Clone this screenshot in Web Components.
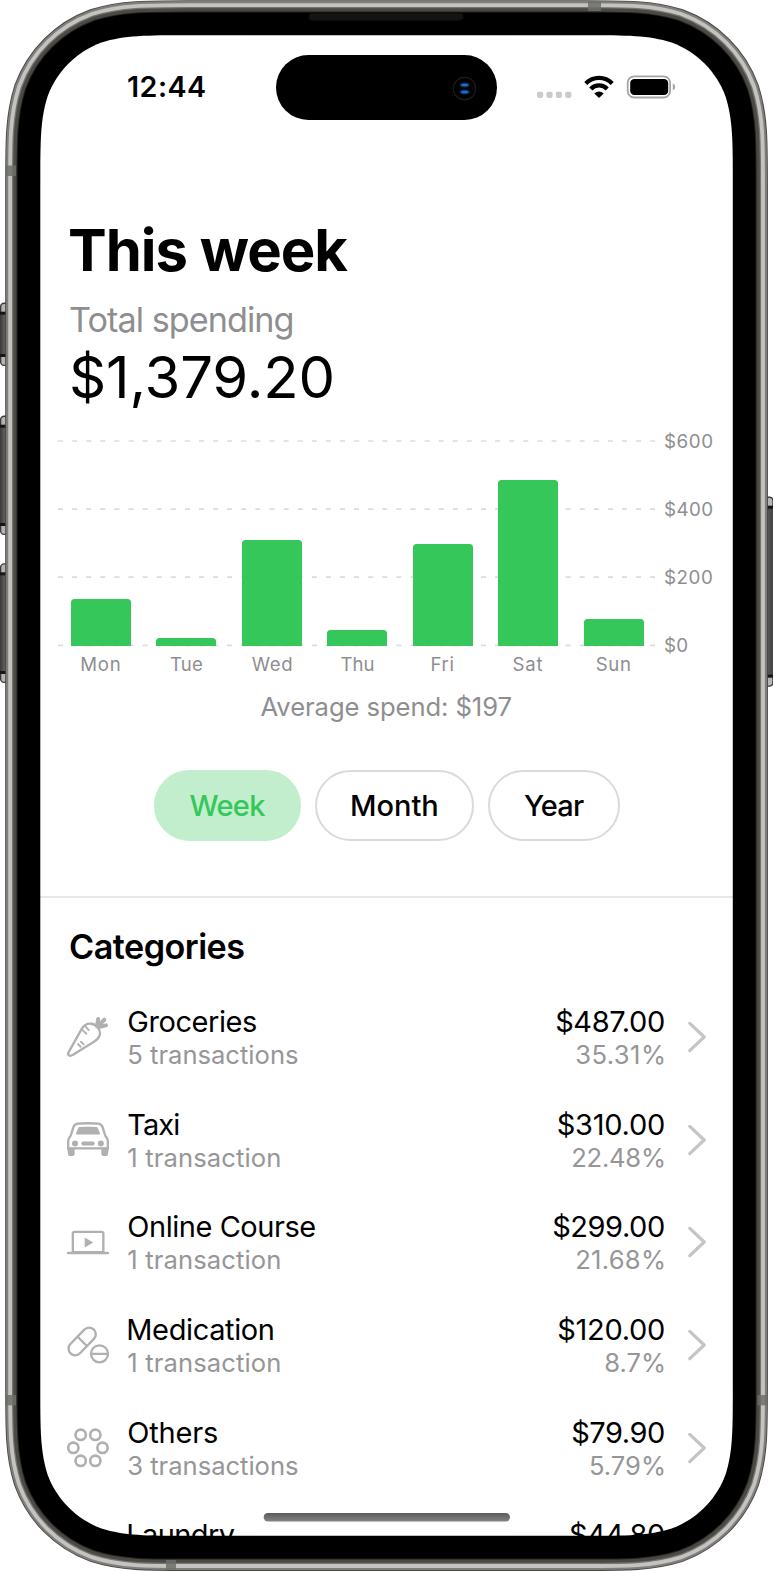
<!DOCTYPE html>
<html lang="en">
<head>
<meta charset="utf-8">
<title>Spending – This week</title>
<style>
  html, body { margin: 0; background: #fff; }
  body { width: 773px; height: 1571px; overflow: hidden; font-family: Inter, "Liberation Sans", sans-serif; color: #000; }
</style>
</head>
<body>
<phone-frame>
  <status-bar></status-bar>
  <week-summary></week-summary>
  <spend-chart></spend-chart>
  <range-picker></range-picker>
  <category-list></category-list>
</phone-frame>

<script>
/* Attaches an open shadow root with the given markup. */
class Base extends HTMLElement {
  mount(html) {
    const t = document.createElement('template');
    t.innerHTML = html;
    this.attachShadow({ mode: 'open' }).append(t.content.cloneNode(true));
  }
}

/* One line of text tracked to a given ink width: <fit-text w s wt>. */
const ctx = document.createElement('canvas').getContext('2d');
customElements.define('fit-text', class extends Base {
  connectedCallback() {
    if (this.shadowRoot) return;
    const w = +this.getAttribute('w'), s = +this.getAttribute('s');
    const wt = this.getAttribute('wt') || 400, lh = this.getAttribute('lh');
    const text = this.textContent;
    ctx.font = `${wt} ${s}px Inter, "Liberation Sans", sans-serif`;
    const m = ctx.measureText(text);
    const ls = (w - (m.actualBoundingBoxRight + m.actualBoundingBoxLeft)) / (text.length - 1);
    this.mount(`<style>
      :host { display: block; flex: none; width: ${w}px; height: ${lh}px; white-space: nowrap;
              font-size: ${s}px; font-weight: ${wt}; line-height: ${lh}px; }
      span { display: block; margin-left: ${m.actualBoundingBoxLeft}px; letter-spacing: ${ls}px; }
    </style><span><slot></slot></span>`);
  }
});

/* Rounded rectangle with continuous-curvature corners. */
function squircle(x, y, w, h, r) {
  const a = 1.528665 * r, b = 1.088493 * r, c = .868407 * r, d = .631494 * r,
        e = .074911 * r, f = .372824 * r, g = .16906 * r, X = x + w, Y = y + h;
  return `M${x + a} ${y}H${X - a}C${X - b} ${y} ${X - c} ${y} ${X - d} ${y + e}C${X - f} ${y + g} ${X - g} ${y + f} ${X - e} ${y + d}C${X} ${y + c} ${X} ${y + b} ${X} ${y + a}
  V${Y - a}C${X} ${Y - b} ${X} ${Y - c} ${X - e} ${Y - d}C${X - g} ${Y - f} ${X - f} ${Y - g} ${X - d} ${Y - e}C${X - c} ${Y} ${X - b} ${Y} ${X - a} ${Y}
  H${x + a}C${x + b} ${Y} ${x + c} ${Y} ${x + d} ${Y - e}C${x + f} ${Y - g} ${x + g} ${Y - f} ${x + e} ${Y - d}C${x} ${Y - c} ${x} ${Y - b} ${x} ${Y - a}
  V${y + a}C${x} ${y + b} ${x} ${y + c} ${x + e} ${y + d}C${x + g} ${y + f} ${x + f} ${y + g} ${x + d} ${y + e}C${x + c} ${y} ${x + b} ${y} ${x + a} ${y}Z`;
}

customElements.define('phone-frame', class extends Base {
  connectedCallback() {
    const path = squircle(40.3, 35.3, 692.5, 1500.5, 97);
    const rings = [[35.1, '#494845'], [34.2, '#807e7b'], [32.1, '#c4c3c1'], [28.3, '#75736f'], [27, '#4b4943'], [23.8, '#24221f'], [22.8, '#000']]
      .map(([d, c]) => `<path d="${path}" fill="none" stroke="${c}" stroke-width="${2 * d}"/>`).join('');
    const key = (x, y, h) => `<rect x="${x + .6}" y="${y + .6}" width="12" height="${h - 1.2}" rx="3.5" fill="#b5b4b2" stroke="#3b3a38" stroke-width="1.4"/>
      <rect x="${x}" y="${y + 10}" width="13" height="${h - 20}" fill="url(#key)"/>
      <rect x="${x}" y="${y + 9}" width="13" height="3" fill="#161615"/><rect x="${x}" y="${y + h - 12}" width="13" height="3" fill="#161615"/>`;
    this.mount(`<style>
      :host { display: grid; width: 773px; height: 1571px; }
      .screen, svg { grid-area: 1 / 1; }
      .screen { margin: 35px 40px; width: 693px; height: 1501px; overflow: hidden; background: #fff; display: flex; flex-direction: column; }
      svg { z-index: 1; pointer-events: none; }
    </style>
    <div class="screen"><slot></slot></div>
    <svg width="773" height="1571" viewBox="0 0 773 1571">
      <defs>
        <mask id="out" maskUnits="userSpaceOnUse" x="0" y="0" width="773" height="1571"><rect width="773" height="1571" fill="#fff"/><path d="${path}" fill="#000"/></mask>
        <linearGradient id="key"><stop offset="0" stop-color="#3a3937"/><stop offset=".35" stop-color="#5f5d5b"/><stop offset="1" stop-color="#444341"/></linearGradient>
        <linearGradient id="bar" x2="0" y2="1"><stop offset="0" stop-color="#5c5b59"/><stop offset="1" stop-color="#848381"/></linearGradient>
      </defs>
      ${key(0, 302.7, 63.3)}${key(0, 415.7, 119.3)}${key(0, 563.3, 119.7)}
      ${key(760.4, 496.7, 190)}
      <g mask="url(#out)">${rings}</g>
      <g fill="#6f6e6a">
        <rect x="6" y="165.5" width="10" height="10.5" opacity=".85"/><rect x="6" y="1395" width="10" height="10.3" opacity=".85"/>
        <rect x="757.5" y="1395" width="10" height="10.3" opacity=".85"/>
        <rect x="588" y="1" width="13" height="10" opacity=".85"/><rect x="166" y="1560" width="10" height="9.5" opacity=".85"/>
      </g>
      <rect x="308.8" y="13.3" width="154.5" height="7" rx="3.5" fill="#141414" stroke="#0e0e0e"/>
      <rect x="263.7" y="1513" width="246.3" height="8.4" rx="4.2" fill="url(#bar)"/>
    </svg>`);
  }
});

customElements.define('status-bar', class extends Base {
  connectedCallback() {
    this.mount(`<style>
      :host { display: flex; align-items: center; height: 65px; padding: 19.5px 0 0 88px; }
      .time { margin-top: -1.6px; }
      .island { width: 221px; height: 65px; margin-left: 71px; border-radius: 33px; background: #000; }
      .sys { margin-left: 39px; }
      svg { display: block; }
    </style>
    <fit-text class="time" w="77" s="28.7" wt="600" lh="65">12:44</fit-text>
    <div class="island"><svg width="221" height="65" viewBox="0 0 221 65">
      <circle cx="188.6" cy="33.6" r="11.2" fill="#020203" stroke="#1c1c1c" stroke-width="1.2"/>
      <ellipse cx="188.7" cy="30" rx="5" ry="2.5" fill="#0a2c66"/><ellipse cx="188.7" cy="30" rx="3.4" ry="1.3" fill="#1f6fc6"/>
      <ellipse cx="188.7" cy="37" rx="5" ry="2.5" fill="#0a2c66"/><ellipse cx="188.7" cy="37" rx="3.4" ry="1.3" fill="#1f6fc6"/>
    </svg></div>
    <svg class="sys" width="142" height="65" viewBox="536 54.5 142 65">
      <g fill="#cbcbcd"><rect x="537" y="91.2" width="6.2" height="6.2" rx="1.8"/><rect x="546.4" y="91.2" width="6.2" height="6.2" rx="1.8"/><rect x="555.8" y="91.2" width="6.2" height="6.2" rx="1.8"/><rect x="565.2" y="91.2" width="6.2" height="6.2" rx="1.8"/></g>
      <g fill="none" stroke="#000" stroke-width="4.3"><path d="M585.8 82.9A18.5 18.5 0 0 1 612.2 82.9"/><path d="M590.8 88.4A11.5 11.5 0 0 1 607.2 88.4"/></g>
      <path d="M594.3 92.9Q599 89 603.7 92.9L599.5 97.1Q599 97.6 598.5 97.1Z"/>
      <rect x="627.7" y="75.8" width="42.4" height="21.2" rx="6.6" fill="#fff" stroke="#a5a5a5" stroke-width="1.8"/>
      <rect x="630.2" y="78.4" width="38" height="16.2" rx="4.2"/>
      <path d="M672.8 82.8Q675.2 84 675.2 86.4T672.8 90Z" fill="#a5a5a5"/>
    </svg>`);
  }
});

customElements.define('week-summary', class extends Base {
  connectedCallback() {
    this.mount(`<style>
      :host { display: flex; flex-direction: column; padding: 95.1px 0 0 30px; }
      .sub { margin-top: 14.4px; color: #8e8e90; }
      .sum { margin: 6px 0 0 2px; }
    </style>
    <fit-text w="278.3" s="58" wt="700" lh="70">This week</fit-text>
    <fit-text class="sub" w="222.5" s="34.2" lh="42">Total spending</fit-text>
    <fit-text class="sum" w="260.5" s="58" lh="60">$1,379.20</fit-text>`);
  }
});

customElements.define('spend-chart', class extends Base {
  connectedCallback() {
    const bars = [['Mon', 38.5, 47.1], ['Tue', 32, 7.4], ['Wed', 39.5, 106], ['Thu', 33, 15.7], ['Fri', 22, 101.6], ['Sat', 29, 165.8], ['Sun', 33.3, 27]];
    const lines = [0, 1, 2, 3].map(i => `<line x1="0" x2="597" y1="${1 + i * 68.1}" y2="${1 + i * 68.1}"/>`).join('');
    this.mount(`<style>
      :host { display: grid; grid-template-columns: 597px auto; padding: 32.8px 0 0 18.3px; color: #8e8e90; }
      .plot { display: grid; height: 205.5px; }
      .plot > * { grid-area: 1 / 1; }
      line { stroke: #dcdcdd; stroke-width: 1.7; stroke-dasharray: 5 9.1; }
      svg { display: block; overflow: visible; }
      .bars, .days { display: grid; grid-template-columns: repeat(7, 60px); column-gap: 25.5px; padding-left: 12.7px; }
      .bars { align-items: end; }
      .bars i { display: block; background: #35c759; border-radius: 3.5px 3.5px 0 0; }
      .axis { margin: -8.2px 0 0 9.7px; display: flex; flex-direction: column; gap: 48.1px; height: 209.2px; }
      .days { padding: 7.6px 0 0 12.1px; justify-items: center; }
      .avg { grid-column: 1 / 3; margin: 16.9px 0 0 202.2px; }
    </style>
    <div class="plot"><svg width="597" height="206">${lines}</svg>
      <div class="bars">${bars.map(b => `<i style="height:${b[2]}px"></i>`).join('')}</div></div>
    <div class="axis">
      <fit-text w="47.3" s="18.8" lh="20">$600</fit-text><fit-text w="47.3" s="18.8" lh="20">$400</fit-text>
      <fit-text w="47" s="18.8" lh="20">$200</fit-text><fit-text w="22.3" s="18.8" lh="20">$0</fit-text>
    </div>
    <div class="days">${bars.map(b => `<fit-text w="${b[1]}" s="18.6" lh="22">${b[0]}</fit-text>`).join('')}</div>
    <fit-text class="avg" w="251" s="25.6" lh="30">Average spend: $197</fit-text>`);
  }
});

customElements.define('range-pill', class extends Base {
  connectedCallback() {
    this.mount(`<style>
      :host { display: flex; box-sizing: border-box; align-items: center; justify-content: center; height: 71px; border-radius: 36px; border: 2px solid #dadadb; }
      :host([on]) { background: #c2eecd; border-color: #c2eecd; color: #34c759; }
    </style><slot></slot>`);
  }
});

customElements.define('range-picker', class extends Base {
  connectedCallback() {
    this.mount(`<style>
      :host { display: flex; gap: 14.3px; padding: 48.6px 0 0 113.7px; }
    </style>
    <range-pill on style="width:147.3px"><fit-text w="75.8" s="29" wt="500" lh="36">Week</fit-text></range-pill>
    <range-pill style="width:158.7px"><fit-text w="85.4" s="29" wt="500" lh="36">Month</fit-text></range-pill>
    <range-pill style="width:131.5px"><fit-text w="60" s="29" wt="500" lh="36">Year</fit-text></range-pill>`);
  }
});

/* Line icons, 3 units per pixel; each viewBox is the 44px box of its row. */
const ICONS = {
  carrot: ['48 46.8', `<path d="M56 158L96 87Q107 71 124 73Q137 75 145 86Q152 96 149 108Q146 118 133 126L69 166Q60 171 56.500 167.500Q52 164 56 158Z"/>
    <path d="M98 92L109 103M107 82L116 92M84 134L92 142M93 127L101 135" stroke-width="5.500"/>
    <path d="M141 80L144.500 59M143 81L163 61M145 83L168 78" stroke-width="12"/>`],
  car: ['48 354.7', `<path d="M54.500 446V424Q55 416 62 408L70 383Q73 373 83 371.500Q114 369.500 145 371.500Q155 373 158 383L166 408Q173 416 173.500 424V446Z"/>
    <g fill="#b0b0b1" stroke="none"><path d="M84 386Q85 382 89 382Q114 380 139 382Q143 382 144 386L150 401Q151 404.500 147 404.500H81Q77 404.500 78 401Z"/>
    <circle cx="75" cy="431" r="9"/><circle cx="152.500" cy="431" r="9"/><rect x="94" y="425" width="40" height="12" rx="6"/>
    <path d="M51.500 444H74V463Q74 469 68 469H60Q54 469 54 463ZM176.500 444H154V463Q154 469 160 469H168Q174 469 174 463Z"/></g>`],
  laptop: ['48 32.7', `<rect x="68.500" y="65.500" width="91.500" height="61" rx="5"/><path d="M54.500 128.500H173.500" stroke-width="7.500"/><path d="M104 82L130 97L104 112Z" fill="#b0b0b1" stroke="none"/>`],
  pills: ['48 340.6', `<rect x="-50" y="-20" width="100" height="40" rx="20" transform="translate(96.500 396) rotate(-46)"/><path d="M83 382L110.500 409.500"/><circle cx="148.500" cy="433" r="25.500"/><path d="M124 433H173"/>`],
  rings: ['48 648.6', `<g stroke-width="8"><circle cx="92" cy="675" r="15.500"/><circle cx="136" cy="675" r="15.500"/><circle cx="70" cy="714" r="15.500"/><circle cx="157.500" cy="714" r="15.500"/><circle cx="92" cy="753" r="15.500"/><circle cx="136" cy="753" r="15.500"/></g>`]
};

customElements.define('category-row', class extends Base {
  connectedCallback() {
    const ic = ICONS[this.getAttribute('icon')];
    this.mount(`<style>
      :host { display: grid; grid-template-columns: 44px 1fr auto 18px; align-items: center; height: 66px; padding: 0 26.7px 0 26px; }
      svg { display: block; }
      .ic { margin-bottom: 1.2px; }
      .l { margin-left: 18.3px; } .r { display: flex; flex-direction: column; align-items: flex-end; margin-right: 24.4px; }
      .l, .r { height: 66px; }
      ::slotted([slot$="2"]) { color: #969698; }
    </style>
    ${ic ? `<svg class="ic" width="44" height="44" viewBox="${ic[0]} 132 132" fill="none" stroke="#b0b0b1" stroke-width="7" stroke-linecap="round" stroke-linejoin="round">${ic[1]}</svg>` : '<div></div>'}
    <div class="l"><slot name="l1"></slot><slot name="l2"></slot></div>
    <div class="r"><slot name="r1"></slot><slot name="r2"></slot></div>
    ${ic ? '<svg width="18" height="32" viewBox="0 0 18 32"><path d="M1.800 1.300L16.200 15L1.800 28.700" fill="none" stroke="#c5c5c7" stroke-width="3.200" stroke-linecap="round" stroke-linejoin="round"/></svg>' : ''}`);
  }
});

customElements.define('category-list', class extends Base {
  connectedCallback() {
    const rows = [
      ['carrot', 'Groceries', 127.7, '5 transactions', 169.7, '$487.00', 107.8, '35.31%', 87.7],
      ['car', 'Taxi', 51, '1 transaction', 152, '$310.00', 106.3, '22.48%', 91.7],
      ['laptop', 'Online Course', 187, '1 transaction', 152, '$299.00', 110.8, '21.68%', 87.7],
      ['pills', 'Medication', 144.5, '1 transaction', 152, '$120.00', 105.7, '8.7%', 58.7],
      ['rings', 'Others', 88.7, '3 transactions', 169.7, '$79.90', 91.8, '5.79%', 74],
      ['', 'Laundry', 106.5, '', 0, '$44.80', 94, '', 0]
    ];
    const t = (slot, text, w, s, lh) => text ? `<fit-text slot="${slot}" w="${w}" s="${s}" lh="${lh}">${text}</fit-text>` : '';
    this.mount(`<style>
      :host { display: block; margin-top: 54.6px; border-top: 2px solid #e8e8e9; }
      .h { margin: 28.9px 0 38.2px 30px; }
      .rows { display: grid; gap: 36.65px; }
    </style>
    <fit-text class="h" w="174.3" s="34.2" wt="600" lh="40">Categories</fit-text>
    <div class="rows">${rows.map(r => `<category-row icon="${r[0]}">${t('l1', r[1], r[2], 29, 34)}${t('l2', r[3], r[4], 25.6, 32)}${t('r1', r[5], r[6], 29, 34)}${t('r2', r[7], r[8], 25.6, 32)}</category-row>`).join('')}</div>`);
  }
});
</script>
</body>
</html>
